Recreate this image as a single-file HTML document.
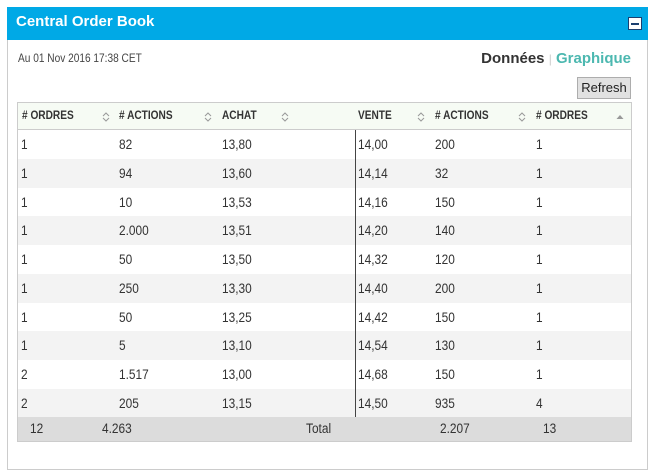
<!DOCTYPE html>
<html><head><meta charset="utf-8"><style>
*{margin:0;padding:0;box-sizing:border-box}
body{width:652px;height:452px;background:#fff;font-family:"Liberation Sans",Arial,sans-serif;position:relative;overflow:hidden;color:#222}
.hdr{position:absolute;left:7px;top:7px;width:641px;height:33px;background:#00a9e6;color:#fff;font-weight:bold;font-size:15px;line-height:29px;padding-left:9px}
.min{position:absolute;right:6px;top:10px;width:14px;height:13px;background:#fff;border:1px solid #1a3f70}
.min:after{content:"";position:absolute;left:2px;right:2px;top:5px;height:2px;background:#1a3f70}
.panel{position:absolute;left:7px;top:40px;width:641px;height:430px;border:1px solid #ccc;border-top:none}
.date{position:absolute;left:18px;top:53px;font-size:11.5px;color:#444;transform:scaleX(.88);transform-origin:left}
.tabs{position:absolute;right:21px;top:50px;font-size:15px;font-weight:bold}
.tabs .d{color:#333}.tabs .g{color:#4cb8b0}.tabs .s{color:#ccc;font-weight:normal;font-size:12px}
.btn{position:absolute;left:577px;top:77px;width:54px;height:22px;background:#e1e1e1;border:1px solid #adadad;font-size:13px;line-height:20px;text-align:center}
.tbl{position:absolute;left:17px;top:102px;width:615px;height:340px;border:1px solid #ccc}
.row{position:absolute;left:0;width:613px;height:29px;font-size:13.5px;color:#333}
.row span{position:absolute;top:7px;transform:scaleX(.88);transform-origin:left}
.th{background:#f6fbf4;border-bottom:1px solid #ccc;height:27px;top:0;font-weight:bold;font-size:11.5px}
.th span{top:7px}
.th svg{position:absolute;top:9px}
.alt{background:#f3f3f3}
.foot{background:#dcdcdc;top:314px;height:24px}
.foot span{top:4px}
.vl{position:absolute;left:337px;top:27px;width:1px;height:287px;background:#444}
</style></head><body>
<div class="hdr">Central Order Book<div class="min"></div></div>
<div class="panel"></div>
<div class="date">Au 01 Nov 2016 17:38 CET</div>
<div class="tabs"><span class="d">Données</span> <span class="s">|</span> <span class="g">Graphique</span></div>
<div class="btn">Refresh</div>
<div class="tbl">
<div class="row th"><span style="left:4px"># ORDRES</span><svg style="left:84px" width="8" height="10"><path d="M1 4L4 1L7 4M1 6L4 9L7 6" fill="none" stroke="#999"/></svg><span style="left:101px"># ACTIONS</span><svg style="left:186px" width="8" height="10"><path d="M1 4L4 1L7 4M1 6L4 9L7 6" fill="none" stroke="#999"/></svg><span style="left:204px">ACHAT</span><svg style="left:263px" width="8" height="10"><path d="M1 4L4 1L7 4M1 6L4 9L7 6" fill="none" stroke="#999"/></svg><span style="left:340px">VENTE</span><svg style="left:399px" width="8" height="10"><path d="M1 4L4 1L7 4M1 6L4 9L7 6" fill="none" stroke="#999"/></svg><span style="left:417px"># ACTIONS</span><svg style="left:500px" width="8" height="10"><path d="M1 4L4 1L7 4M1 6L4 9L7 6" fill="none" stroke="#999"/></svg><span style="left:518px"># ORDRES</span><svg style="left:598px" width="8" height="10"><path d="M0.5 7L4 3L7.5 7Z" fill="#999"/></svg></div>
<div class="row" style="top:27px"><span style="left:3px">1</span><span style="left:101px">82</span><span style="left:204px">13,80</span><span style="left:340px">14,00</span><span style="left:417px">200</span><span style="left:518px">1</span></div>
<div class="row alt" style="top:56px"><span style="left:3px">1</span><span style="left:101px">94</span><span style="left:204px">13,60</span><span style="left:340px">14,14</span><span style="left:417px">32</span><span style="left:518px">1</span></div>
<div class="row" style="top:85px"><span style="left:3px">1</span><span style="left:101px">10</span><span style="left:204px">13,53</span><span style="left:340px">14,16</span><span style="left:417px">150</span><span style="left:518px">1</span></div>
<div class="row alt" style="top:113px"><span style="left:3px">1</span><span style="left:101px">2.000</span><span style="left:204px">13,51</span><span style="left:340px">14,20</span><span style="left:417px">140</span><span style="left:518px">1</span></div>
<div class="row" style="top:142px"><span style="left:3px">1</span><span style="left:101px">50</span><span style="left:204px">13,50</span><span style="left:340px">14,32</span><span style="left:417px">120</span><span style="left:518px">1</span></div>
<div class="row alt" style="top:171px"><span style="left:3px">1</span><span style="left:101px">250</span><span style="left:204px">13,30</span><span style="left:340px">14,40</span><span style="left:417px">200</span><span style="left:518px">1</span></div>
<div class="row" style="top:200px"><span style="left:3px">1</span><span style="left:101px">50</span><span style="left:204px">13,25</span><span style="left:340px">14,42</span><span style="left:417px">150</span><span style="left:518px">1</span></div>
<div class="row alt" style="top:228px"><span style="left:3px">1</span><span style="left:101px">5</span><span style="left:204px">13,10</span><span style="left:340px">14,54</span><span style="left:417px">130</span><span style="left:518px">1</span></div>
<div class="row" style="top:257px"><span style="left:3px">2</span><span style="left:101px">1.517</span><span style="left:204px">13,00</span><span style="left:340px">14,68</span><span style="left:417px">150</span><span style="left:518px">1</span></div>
<div class="row alt" style="top:286px"><span style="left:3px">2</span><span style="left:101px">205</span><span style="left:204px">13,15</span><span style="left:340px">14,50</span><span style="left:417px">935</span><span style="left:518px">4</span></div>
<div class="row foot"><span style="left:12px">12</span><span style="left:84px">4.263</span><span style="left:288px">Total</span><span style="left:422px">2.207</span><span style="left:525px">13</span></div>
<div class="vl"></div>
</div>
</body></html>
